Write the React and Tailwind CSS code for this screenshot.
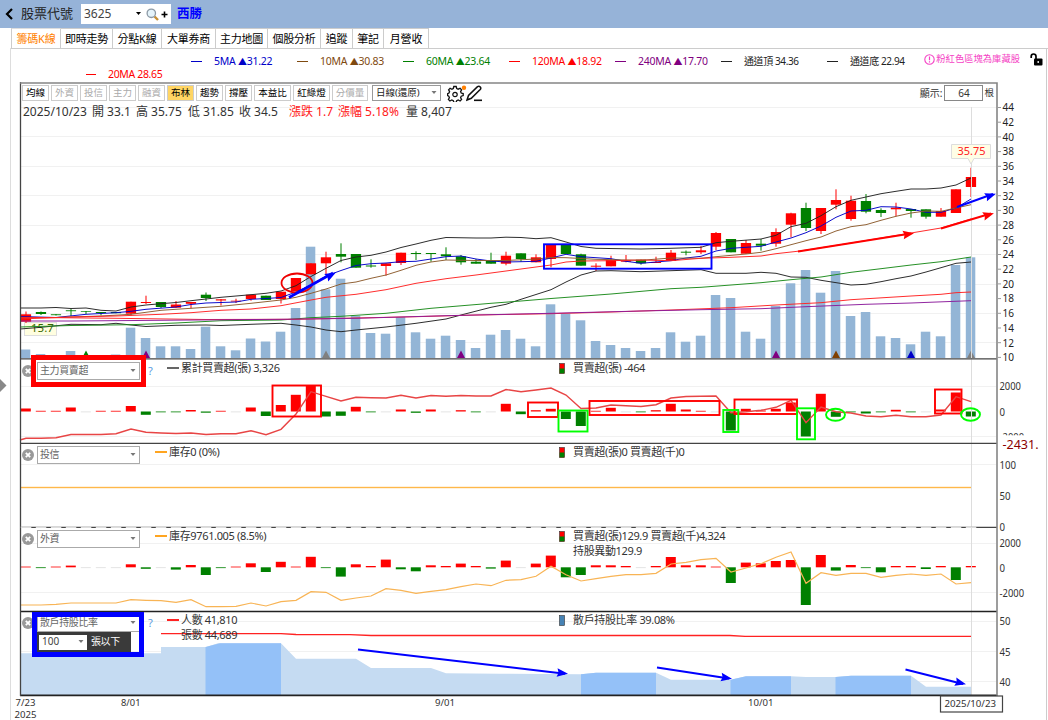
import React from 'react';

const RED = '#ff0000';
const GREEN = '#008000';

// body top, body bottom, wick top, wick bottom, color, volume top
const candles = [
  [314.3, 321.7, 311.5, 323, 'r', 349.5], [312, 314, 311.5, 315, 'g', 354], [314.3, 315.2, 314, 315.5, 'g', 356.5],
  [310.3, 311.2, 309, 316, 'g', 351], [311.3, 312, 311, 314, 'g', 356.5], [312, 313, 312, 315.3, 'g', 356.5],
  [312, 313.2, 312, 313.2, 'g', 354.5], [301.7, 313.7, 301.7, 315.5, 'r', 327.7], [302, 303, 295.7, 304, 'r', 338],
  [302, 307, 302, 308, 'g', 346.3], [304.5, 307.7, 301, 307.7, 'r', 346.3], [302, 303.8, 302, 308.3, 'r', 349],
  [294.7, 298, 292.5, 301, 'g', 326.7], [299.3, 300.5, 299, 305.5, 'r', 346.3], [300.7, 301.5, 298.7, 303, 'r', 350.3],
  [294.7, 299, 294.7, 300.7, 'r', 338.5], [295.7, 300, 295.7, 300, 'g', 341.5], [291.7, 299, 291.7, 303.5, 'r', 331.7],
  [278, 291, 278, 291, 'r', 308], [263.3, 274.3, 263.3, 274.3, 'r', 246.7], [257.3, 263.3, 251.7, 274.3, 'r', 289.3],
  [254, 256.7, 243.3, 262.3, 'g', 278.7], [254, 267.7, 254, 267.7, 'g', 315.7], [265.5, 266.5, 259.3, 267.7, 'g', 333],
  [263.3, 266, 263.3, 275.7, 'r', 333.7], [252.7, 263, 252.7, 265, 'r', 317], [253, 254, 251.3, 260, 'g', 332.3],
  [253, 254, 253, 261.7, 'g', 338.7], [254.3, 256.3, 247.3, 260, 'g', 335.7], [256.3, 262.3, 255, 264.7, 'g', 340],
  [261.7, 263.7, 259, 263.7, 'g', 348], [261, 263.7, 252.7, 263.7, 'g', 334.7], [255.7, 263.7, 251.7, 265.3, 'r', 330],
  [253.3, 259, 253.3, 261.7, 'g', 338.7], [257.3, 262.3, 254.3, 262.3, 'r', 346.3], [244.7, 259, 244.7, 267.3, 'r', 304.3],
  [244, 254, 244, 254, 'g', 313.7], [254.3, 265.7, 253.7, 265.7, 'g', 320.3], [265.7, 266.7, 263.3, 271, 'r', 341],
  [260, 266.3, 255.7, 266.3, 'r', 345], [260.3, 261.7, 255, 262.3, 'r', 348], [259.7, 263.3, 259.7, 264.7, 'g', 351],
  [262, 263, 256.7, 263, 'r', 348], [252.7, 261, 250, 261, 'r', 332.3], [251.7, 252.7, 250.5, 255.3, 'g', 341.7],
  [250.3, 252.3, 246, 254, 'r', 335.7], [233, 246.7, 232, 250, 'r', 295], [239, 252.3, 239, 252.3, 'g', 298],
  [243, 253.7, 240, 253.7, 'r', 331.7], [243.7, 245.7, 239, 250.7, 'g', 338.7], [232, 243.7, 228.3, 246.7, 'r', 306],
  [213.3, 224.7, 212.7, 237.3, 'r', 283.3], [208, 228, 202.7, 231, 'g', 270], [208, 231, 208, 234, 'r', 292.7],
  [200, 204.7, 189.3, 209.3, 'r', 271], [200.7, 219, 195.7, 220.7, 'r', 316], [201, 211.7, 194, 213.3, 'g', 312],
  [210, 213, 208.3, 217, 'g', 336.3], [207.7, 209.3, 202.7, 216.3, 'r', 338], [209, 211, 209, 217.7, 'g', 344.3],
  [209.3, 216.7, 209.3, 218.7, 'g', 331.7], [211, 216.7, 208, 216.7, 'r', 336.3], [189.3, 213, 189.3, 213, 'r', 265],
  [177, 187, 167.7, 197, 'r', 257.3],
];

const mainBars = [3, 0.7, 0.7, 4, 0, 0.7, 0.7, 5.5, -3.3, -0.7, -0.7, 1.5, -1.2, 0.7, 0, 4, -4.5, 6.5, 16.7, 26, -5, -4.3,
  4.7, -0.7, 0, 2, -1.3, 2, 0, 1.3, -0.7, 0, 7.7, -2.7, 1.3, 2.7, -7.5, -14.5, 0.7, 3.7, 0, -0.7, 1.3, 7.7, 2, 0.7, 0, -19,
  2.7, 1, 2.7, 9, -25, 17.7, -5.3, -0.7, -2, -0.7, 1.7, -0.7, 0, 2, 19, -5];

const mainLine = [438.3, 438.3, 437.7, 434.5, 434.5, 434.5, 433.7, 429, 432.3, 433, 433.5, 433, 434.5, 433.7, 433.7, 430.7,
  434.7, 429.3, 414, 391.7, 396.3, 401, 397.3, 397.7, 398, 395.3, 398, 395.5, 396.3, 395.5, 396, 396, 389.5, 391.7, 390, 388,
  395, 408.5, 408, 405, 405.7, 406.5, 404.7, 398, 396.5, 396.2, 396, 412.7, 411.7, 410.3, 407.3, 400.3, 422.7, 407, 411.7,
  413, 416, 416.7, 415.3, 416.7, 416.7, 415, 396.7, 401.7];

const foreignBars = [0.7, -0.7, 0.7, 1.7, 0, 0, 0, 3, -1.5, 0, -2.3, 2.3, -7.7, -0.7, 0.7, 4, -4.7, 5.5, 0.7, 10.5, -0.7, -9.3,
  3, 1.3, 7.7, -2, -4, 2, 1.3, 3.7, 1.3, -1.3, 6.7, 0, 3.7, 11.7, -10, -7.7, 2, 2, 1.3, 0, 1.3, 10.3, 2, 2, 0.7, -15.7, 4.7,
  4, 6.3, 7.3, -37.7, 12.3, -3.3, 2.3, -0.7, -5, 1.3, 1.3, -1.7, 1.3, -12.7, 1.3];

const foreignLine = [605, 605, 604.3, 603, 603, 603, 603, 599.7, 600.3, 600.7, 602.3, 599.7, 606.7, 606.7, 606.3, 603, 606,
  601.7, 600.3, 591.7, 592.3, 600.3, 598, 596, 588.7, 590.3, 593.3, 591.3, 589.7, 586.7, 584, 585.7, 580.3, 579.7, 576.3,
  566.3, 574.7, 581, 578.7, 576.3, 574.7, 574.7, 573.3, 564, 562.3, 559.7, 558.3, 572, 568, 563.7, 557.3, 552, 583.3, 572.7,
  575.3, 573.3, 573.3, 577.3, 575.3, 574, 575.3, 574, 584, 582.7];

const lines = [
  { color: '#222', pts: '20,308 41,308 56,307.5 71,308.5 86,308 101,310.3 116,311 131,307 146,305 161,303.7 176,302.5 191,300.7 206,299 221,297.3 236,296 251,294.7 266,293.3 281,291 296,285.7 311,276.5 326,268.3 341,260.5 356,257 371,255.3 386,252 401,247.5 416,244 431,240.3 446,237.5 476,238 491,238 506,237.2 521,237.5 536,238.7 551,237.7 566,242 581,246.5 596,248.3 641,249 671,248.3 701,247.3 716,242.7 731,241.3 761,239 776,235.3 791,226.7 806,223.3 821,215.7 836,206.7 851,200.3 866,197 881,193.7 896,191.3 911,189 926,189 941,188 956,185 971,178' },
  { color: '#222', pts: '20,329 41,327.3 71,324.3 101,324.7 116,323.3 131,325 146,326.5 176,325.3 206,325 221,325.5 251,324.3 281,323.3 296,325 311,327 326,330 341,331.7 356,330 386,327 416,323.3 446,319 461,315 491,307.3 506,304.3 521,299.3 551,289.7 566,282 581,275 596,271 611,270.7 641,271.7 671,270.7 701,269.7 716,273.3 746,273.3 761,272.3 776,273.3 791,277 806,277.3 821,280.3 851,285 866,284.3 881,281.7 896,278.7 911,276 926,272 941,267.7 956,263.3 971,262' },
  { color: '#0000c8', pts: '20,316.5 56,317.5 86,314.3 116,312.7 131,311.3 146,309.3 176,307 191,304.5 206,303 236,302 251,299.3 266,298.5 281,297.5 296,292 311,285 326,276 341,270.5 356,265.5 371,263.7 386,263 401,261.7 416,261.3 431,259 446,256.7 461,256 476,259 491,261 506,262 521,261.7 536,261.3 551,258 566,254.3 581,256.7 611,258.7 626,261.3 641,263.3 656,262 671,260.7 686,258 701,256.3 716,251 731,248.3 761,246.3 776,242 791,238 806,232.7 821,226 836,217.3 851,211 866,210.3 881,206.7 896,207 911,209 926,212.3 941,212.3 956,208 971,199' },
  { color: '#8b5a2b', pts: '20,317.7 56,317.5 101,316 131,314.3 161,310.3 191,308.3 221,306.3 251,303.3 281,300 296,297.3 311,293.3 326,289 341,284 356,282 371,278.3 386,275 401,270.3 416,265.3 431,262 446,260 476,260.5 506,260.5 536,259 551,257.5 566,257.7 596,259.3 641,260.3 671,258 701,258.3 716,256.7 746,254 761,252.3 776,248.7 806,240.7 821,237 836,231 851,226.7 866,224.7 881,220.3 896,216.3 911,213 926,211 941,211.3 956,208 971,204.7' },
  { color: '#f22', pts: '20,319 71,317 116,316 161,314.3 191,312.7 221,310.3 251,309 281,305.7 311,300 326,297.3 356,294.3 386,289.7 416,283.3 446,278.7 476,275 506,271 536,267 551,265 566,262 581,261 611,260.7 641,260 671,260.7 701,258.3 731,257.3 761,256 776,253.7 800,251 851,243 911,233 941,228 971,219' },
  { color: '#1a8a1a', pts: '20,327 71,325.5 131,324.7 176,323 221,320.7 281,320 311,317.7 341,316.3 386,313.3 431,308.3 491,303.3 521,301 551,298.5 611,294 671,288.7 701,287.3 731,285 761,282.7 791,279.7 821,277 851,272.3 881,268.7 911,265 941,261.7 971,257' },
  { color: '#f22', pts: '20,317.3 116,318.3 206,319.5 296,319.3 356,318 416,316.7 476,315 551,313.7 611,312 671,310 731,307.7 776,305 821,302.7 851,299.7 911,296 941,294.3 956,292.7 971,292' },
  { color: '#8b1a9b', pts: '20,321 71,321 161,320.3 281,319.3 356,318.3 446,315.7 551,313.3 641,311 701,309.7 761,308.7 806,306.7 866,304.3 911,303 971,300.7' },
];

const tabs = [
  { name: '籌碼K線', cls: 'w-[50px] text-[#ff7f00] border-l border-t-[#ddd] border-b-transparent' },
  { name: '即時走勢', cls: 'w-[52px]' },
  { name: '分點K線', cls: 'w-[49px]' },
  { name: '大單券商', cls: 'w-[54px]' },
  { name: '主力地圖', cls: 'w-[52px]' },
  { name: '個股分析', cls: 'w-[53px]' },
  { name: '追蹤', cls: 'w-[32px]' },
  { name: '筆記', cls: 'w-[31px]' },
  { name: '月營收', cls: 'w-[45px]' },
];

const legends = [
  { name: '5MA', value: '31.22', up: true, cls: 'text-[#0000c8]' },
  { name: '10MA', value: '30.83', up: true, cls: 'text-[#7f4a10]' },
  { name: '60MA', value: '23.64', up: true, cls: 'text-[#008000]' },
  { name: '120MA', value: '18.92', up: true, cls: 'text-[#ff0000]' },
  { name: '240MA', value: '17.70', up: true, cls: 'text-[#800080]' },
  { name: '通道頂', value: '34.36', cls: 'text-[#222]' },
  { name: '通道底', value: '22.94', cls: 'text-[#222]' },
];

const tools = [
  ['均線', 'w-[27px] text-black'], ['外資', 'w-[27px] text-[#aaa]'], ['投信', 'w-[27px] text-[#aaa]'],
  ['主力', 'w-[27px] text-[#aaa]'], ['融資', 'w-[27px] text-[#aaa]'], ['布林', 'w-[27px] text-black bg-[#ffd564]'],
  ['趨勢', 'w-[27px] text-black'], ['撐壓', 'w-[27px] text-black'], ['本益比', 'w-[37px] text-black'],
  ['紅綠燈', 'w-[37px] text-black'], ['分價量', 'w-[36px] text-[#aaa]'],
];

const barX = (i) => 26 + i * 15;
const toPoints = (arr) => arr.map((y, i) => `${barX(i)},${y}`).join(' ');

const Bars = ({ values, zero }) => (
  <g>
    {values.map((v, i) => (
      <rect
        key={i}
        x={barX(i) - 5.2}
        width="10"
        y={v > 0 ? zero - v : zero}
        height={Math.max(Math.abs(v), 0.8)}
        fill={v === 0 ? '#ddd' : v > 0 ? RED : GREEN}
      />
    ))}
  </g>
);

const Arrow = ({ x1, y1, x2, y2, color, width = 2.2 }) => {
  const angle = (Math.atan2(y2 - y1, x2 - x1) * 180) / Math.PI;
  return (
    <g>
      <line x1={x1} y1={y1} x2={x2 - 2} y2={y2} stroke={color} strokeWidth={width} />
      <path d="M1 0L-10 -4.300L-8.500 0L-10 4.300Z" fill={color} transform={`translate(${x2} ${y2}) rotate(${angle})`} />
    </g>
  );
};

const Caret = () => (
  <svg width="6" height="4" viewBox="0 0 6 4"><path d="M.5 0H5.500L3 3Z" fill="#777" /></svg>
);

const Label = ({ x, y, w, children, ...rest }) => (
  <text x={x} y={y} textLength={w} lengthAdjust="spacingAndGlyphs" {...rest}>{children}</text>
);

const ChartBase = () => (
  <svg className="absolute left-0 top-0" width="1048" height="638" viewBox="0 82 1048 638">
    {/* grid */}
    <g stroke="#f1f1f1" strokeWidth="1">
      {[107.5, 136.5, 166.5, 195.5, 225.5, 254.5, 284.5, 313.5, 342.5, 386.5, 436.5, 464.5, 543.5, 592.5, 621.5, 651.5, 681.5].map((y) => (
        <line key={y} x1="20" x2="996" y1={y} y2={y} />
      ))}
    </g>

    {/* shareholder area */}
    <path d="M20 695V653.3H161V647H206L218 643.3H281L296 658.7H356L371 668H431L446 673.3L500 673.7L581 674.3L596 672.7H656L671 679.7H731L746 676.3H791L806 677H836L851 675.7H911L926 686.7H971V695Z" fill="#c5dbf2" />
    <g fill="#94c1f8">
      <path d="M205.500 695V647L220 643.300H281V695Z" />
      <path d="M581 695V674.300L596 672.700H656V695Z" />
      <path d="M730.500 695V679.700L746 676.300H791V695Z" />
      <path d="M835.500 695V677L851 675.700H911V695Z" />
    </g>
    <path d="M161 633.700H281L296 634.500L350 634.700L371 635.500H730L745 636.400H971" fill="none" stroke="#f22" strokeWidth="1.300" />

    {/* volume and candles */}
    {candles.map((c, i) => (
      <rect key={i} x={barX(i) - 5.2} y={c[5]} width="9.500" height={358 - c[5]} fill="#93b5d6" />
    ))}
    <rect x="24.500" y="322.500" width="32" height="13" fill="#fffee0" stroke="#ddd" />
    <text x="31" y="332" fontSize="11.500" fill="#3a6b00">15.7</text>
    {candles.map((c, i) => (
      <g key={i} fill={c[4] === 'r' ? RED : GREEN}>
        <rect x={barX(i) - 5.2} y={c[0]} width="10.300" height={c[1] - c[0]} />
        <rect x={barX(i) - 0.5} y={c[2]} width="1" height={c[3] - c[2]} />
      </g>
    ))}
    {lines.map((l, i) => (
      <polyline key={i} points={l.pts} fill="none" stroke={l.color} strokeWidth="0.950" />
    ))}
    {[[86, '#008000'], [146, '#800080'], [326, '#808080'], [461, '#800080'], [776, '#800080'], [836, '#804000'], [911, '#0000c8'], [971, '#808080']].map(([x, fill]) => (
      <path key={x} d={`M${x - 4} 358L${x} 350.5L${x + 4} 358Z`} fill={fill} />
    ))}

    <Bars values={mainBars} zero={411.5} />
    <polyline points={`20,440 ${toPoints(mainLine)}`} fill="none" stroke="#e84545" strokeWidth="1.400" />
    <rect x="20" y="486.800" width="951" height="1.400" fill="#ffb84a" />
    <Bars values={foreignBars} zero={567.3} />
    <polyline points={`20,605 ${toPoints(foreignLine)}`} fill="none" stroke="#f8b455" strokeWidth="1.200" />
    <line x1="971.500" x2="971.500" y1="107" y2="695" stroke="#ddd" />

    {/* frame */}
    <g stroke="#444" strokeWidth="1.300">
      <line x1="20" x2="997" y1="358.800" y2="358.800" />
      <line x1="20" x2="997" y1="443.300" y2="443.300" />
      <line x1="20" x2="997" y1="527.300" y2="527.300" />
      <line x1="20" x2="997" y1="611.500" y2="611.500" stroke="#222" />
      <line x1="20" x2="997" y1="695.400" y2="695.400" strokeWidth="1.800" stroke="#222" />
      <line x1="20.500" x2="20.500" y1="82" y2="696" />
    </g>
    {candles.map((c, i) => (
      <rect key={i} x={barX(i) - 5.2} y="526.500" width="10.500" height="1.500" fill="#ddd" />
    ))}
    <path d="M20 83H997V696" fill="none" stroke="#858585" strokeWidth="1.600" />

    {/* axis labels */}
    <g fontSize="10.700" fill="#222">
      {Array.from({ length: 18 }, (_, i) => (
        <g key={i}>
          <line x1="998" x2="1001" y1={107.5 + i * 14.7} y2={107.5 + i * 14.7} stroke="#999" />
          <Label x="1002.500" y={111.3 + i * 14.7} w="11.500">{44 - i * 2}</Label>
        </g>
      ))}
    </g>
    <g fontSize="11.500" fill="#333">
      <Label x="999.500" y="390" w="21.500">2000</Label>
      <Label x="999.500" y="415.700" w="5.500">0</Label>
      <Label x="999.500" y="441" w="24.500">-2000</Label>
      <rect x="999" y="435.300" width="40" height="20" fill="#fff" />
      <Label x="1002.500" y="448.800" w="36" fontSize="12.500" fill="#8b0000">-2431.</Label>
      <Label x="999.500" y="468.500" w="16.500">100</Label>
      <Label x="999.500" y="499.500" w="11">50</Label>
      <Label x="999.500" y="530.500" w="5.500">0</Label>
      <Label x="999.500" y="547" w="21.500">2000</Label>
      <Label x="999.500" y="571.500" w="5.500">0</Label>
      <Label x="999.500" y="596.500" w="24.500">-2000</Label>
      <Label x="999.500" y="625" w="11">50</Label>
      <Label x="999.500" y="655.500" w="11">45</Label>
      <Label x="999.500" y="685.500" w="11">40</Label>
    </g>
    <g fontSize="9.500" fill="#333">
      <Label x="15.500" y="706.300" w="20">7/23</Label>
      <Label x="14.500" y="717.500" w="22">2025</Label>
      <Label x="121" y="706.300" w="19.500">8/01</Label>
      <Label x="435" y="706.300" w="20">9/01</Label>
      <Label x="748" y="706.300" w="25.500">10/01</Label>
      <rect x="940.500" y="696" width="62" height="16" fill="#fff" stroke="#444" strokeWidth="1.200" />
      <Label x="944.500" y="707" w="51.500">2025/10/23</Label>
    </g>

    <path d="M951.500 144.500H990.500V158.500H974L971 164L968 158.500H951.500Z" fill="#fffee6" stroke="#ddd" />
    <Label x="957.500" y="155" w="28" fontSize="11" fill="#f22">35.75</Label>
  </svg>
);

const Annotations = () => (
  <svg className="absolute left-0 top-0 pointer-events-none" width="1048" height="638" viewBox="0 82 1048 638" fill="none">
    <rect x="33.500" y="357.500" width="110" height="27" stroke={RED} strokeWidth="5" />
    <rect x="34.500" y="614.500" width="107" height="40" stroke="#0000ff" strokeWidth="5" />
    <ellipse cx="297" cy="283" rx="15.500" ry="9.500" stroke="#e00" strokeWidth="1.800" />
    <rect x="544" y="244.300" width="167.500" height="24.400" stroke="#00f" strokeWidth="1.900" />
    <Arrow x1={289} y1={297.500} x2={335} y2={273} color="#00f" width={2.600} />
    <Arrow x1={798} y1={251.500} x2={913} y2={233.500} color={RED} width={2} />
    <Arrow x1={941} y1={228.500} x2={993} y2={213.500} color={RED} width={2} />
    <Arrow x1={957} y1={207} x2={995} y2={194} color="#00f" width={2} />
    <g stroke={RED} strokeWidth="1.900">
      <rect x="272.500" y="385.500" width="48.500" height="31" />
      <rect x="528" y="402.500" width="30" height="14.500" />
      <rect x="589.500" y="401" width="130" height="14" />
      <rect x="734.500" y="399.500" width="62.500" height="14.500" />
      <rect x="935" y="389.500" width="26.500" height="24" />
    </g>
    <g stroke="#00ff00" strokeWidth="1.900">
      <rect x="558.500" y="410.500" width="29" height="21" />
      <rect x="723.300" y="410" width="15" height="22" />
      <rect x="797" y="408.300" width="18" height="31" />
      <ellipse cx="835.500" cy="414.700" rx="9.500" ry="6" />
      <ellipse cx="970.500" cy="414.500" rx="9.500" ry="6.200" />
    </g>
    <Arrow x1={358} y1={649.500} x2={567} y2={673.700} color="#00f" width={2} />
    <Arrow x1={657} y1={667.500} x2={731} y2={678.500} color="#00f" width={2} />
    <Arrow x1={905.500} y1={669.500} x2={965} y2={684} color="#00f" width={2} />
    <path d="M0 379L6.500 385.500L0 392Z" fill="#888" />
  </svg>
);

const PanelHeader = ({ title, help, count, left, leftSub, leftColor, right, rightSub, icon }) => (
  <div className="relative flex items-start pl-[22px] text-xs text-[#333]">
    <svg className="mt-[5px] shrink-0" width="12" height="12" viewBox="0 0 12 12">
      <circle cx="6" cy="6" r="6" fill="#999" />
      <path d="M3.800 3.800L8.200 8.200M8.200 3.800L3.800 8.200" stroke="#fff" strokeWidth="1.800" />
    </svg>
    <div className="ml-[3px] mt-[2px] w-[103px] shrink-0">
      <div className="flex h-[18px] items-center justify-between border border-[#aaa] bg-white pl-[2px] pr-[3px] text-[10px] text-[#666]">
        <span className="whitespace-nowrap tracking-[-0.4px]">{title}</span>
        <Caret />
      </div>
      {count && (
        <div className="flex h-[20px] w-[94px] items-center bg-[#3a3a3a] pl-[2px] text-[10px] text-white">
          <div className="mr-[4px] flex h-[15px] w-[48px] items-center justify-between bg-white px-[3px] text-[#444]">
            {count}<Caret />
          </div>
          <span className="whitespace-nowrap tracking-[-0.4px]">張以下</span>
        </div>
      )}
    </div>
    <span className="mt-[4px] w-[15px] shrink-0 pl-[8px] text-[11px] leading-[14px] text-[#5b9be0]">{help}</span>
    <div className={`flex shrink-0 items-start gap-[2px] ${help ? 'w-[404px] pl-[12px]' : 'w-[404px] pl-0'}`}>
      <svg className="mt-[7px] shrink-0" width="12" height="2"><rect width="12" height="2" fill={leftColor} /></svg>
      <div className="whitespace-nowrap text-[11px] leading-[15px] tracking-[-0.35px]">
        <div>{left}</div>
        <div>{leftSub}</div>
      </div>
    </div>
    <svg className="mt-[3px] shrink-0" width="6" height="11" viewBox="0 0 6 11">
      <rect x=".5" y=".5" width="5" height="10" fill={icon === 'blue' ? '#4682b4' : RED} stroke="#333" strokeWidth="0.600" />
      {icon !== 'blue' && <rect x="0.700" y="5.500" width="4.600" height="4.800" fill={GREEN} />}
    </svg>
    <div className="ml-[8px] whitespace-nowrap text-[11px] leading-[15px] tracking-[-0.35px]">
      <div>{right}</div>
      <div>{rightSub}</div>
    </div>
  </div>
);

const Toolbar = () => (
  <div className="relative flex h-[20px] items-center pl-[22px] pt-[2px]">
    <div className="flex gap-[2px]">
      {tools.map(([name, cls]) => (
        <button key={name} className={`h-[16px] whitespace-nowrap border border-[#ccc] text-center text-[9.5px] leading-[14px] ${cls}`}>{name}</button>
      ))}
    </div>
    <div className="ml-[4px] flex h-[16px] w-[69px] items-center justify-between border border-[#999] pl-[3px] pr-[3px] text-[9.5px] text-[#222]">
      <span className="whitespace-nowrap">日線(還原)</span>
      <Caret />
    </div>
    <svg className="ml-[6px]" width="20" height="17" viewBox="0 0 20 17" fill="none">
      <path d="M6.800 1.500h2.400l.5 2 1.500.7 1.900-1 1.500 1.600-1 1.800.6 1.400 2 .6v2l-2 .6-.6 1.500 1 1.800-1.500 1.500-1.900-1-1.500.7-.5 1.800H6.800l-.5-1.800-1.500-.7-1.900 1-1.500-1.500 1-1.800L1.800 11.200.6 10.600v-2L2 8l.6-1.400-1-1.800 1.500-1.600 1.800 1 1.400-.7Z" stroke="#111" strokeWidth="1.300" />
      <circle cx="8" cy="9.500" r="2.200" stroke="#111" strokeWidth="1.200" />
      <circle cx="17" cy="2.800" r="2.200" fill="#ff7f00" />
    </svg>
    <svg className="-ml-[1px]" width="17" height="17" viewBox="0 0 17 17" fill="none" stroke="#111">
      <path d="M1 15L2.500 10.500L11.500 1.700Q13 .7 14.300 2Q15.300 3.200 14.200 4.500L5.300 13.300Z" strokeWidth="1.500" />
      <path d="M8 15.300H16" strokeWidth="1.600" />
    </svg>
    <div className="ml-auto flex items-center pr-[54px] text-[10px] text-[#333]">
      <span className="mr-[2px]">顯示:</span>
      <div className="h-[16px] w-[39px] border border-[#888] text-center leading-[14px]">64</div>
      <span className="ml-[1px] text-[9.5px]">根</span>
    </div>
  </div>
);

const App = () => {
  return (
    <div className="relative flex h-[720px] w-[1048px] flex-col overflow-hidden bg-white font-['Noto_Sans','Noto_Sans_CJK_TC',sans-serif]">
      <header className="flex h-[28px] shrink-0 items-center bg-[#96b3d8] pl-[5px] text-[13px] text-[#222]">
        <svg width="8" height="12" viewBox="0 0 8 12"><path d="M7 1L2 6L7 11" fill="none" stroke="#000" strokeWidth="2.200" /></svg>
        <span className="ml-[8px] w-[60px] whitespace-nowrap">股票代號</span>
        <div className="flex h-[20px] w-[90px] items-center bg-white pl-[3px] text-[12px]">
          <span className="w-[52px] text-[#444]">3625</span>
          <svg width="5" height="4" viewBox="0 0 5 4"><path d="M0 0H5L2.500 3Z" fill="#000" /></svg>
          <svg className="ml-[5px]" width="13" height="13" viewBox="0 0 13 13" fill="none">
            <path d="M8.500 8.500L12 12" stroke="#c79035" strokeWidth="2.400" />
            <circle cx="5.300" cy="5.300" r="4.200" fill="#e5f4fb" stroke="#8c99a5" strokeWidth="1.300" />
          </svg>
          <svg className="ml-[2px]" width="7" height="7" viewBox="0 0 7 7"><path d="M3.500 .5V6.500M.5 3.500H6.500" stroke="#000" strokeWidth="1.600" /></svg>
        </div>
        <span className="ml-[6px] text-[12.5px] font-bold text-[#00f]">西勝</span>
      </header>

      <div className="relative flex min-h-0 flex-1 flex-col">
        <nav className="ml-[11px] flex h-[21px] shrink-0 border-b border-[#ccc]">
          {tabs.map((tab) => (
            <button key={tab.name} className={`h-[21px] shrink-0 whitespace-nowrap border-b border-r border-t border-[#ccc] text-center text-[11px] leading-[20px] tracking-[-0.2px] ${tab.cls}`}>{tab.name}</button>
          ))}
        </nav>

        <div className="relative h-[33px] shrink-0 pt-[5px] text-[10.5px] leading-[14px]">
          <div className="flex pl-[191px]">
            {legends.map((l) => (
              <div key={l.name} className={`flex h-[14px] w-[106px] shrink-0 items-center whitespace-nowrap ${l.cls}`}>
                <span className="mr-[12px] h-px w-[11px] bg-current" />
                {l.up
                  ? <span className="tracking-[-0.25px]">{l.name} <span className="text-[9px]">▲</span>{l.value}</span>
                  : <span className="text-[10px] tracking-[-0.4px]">{l.name} {l.value}</span>}
              </div>
            ))}
          </div>
          <div className="-mt-px flex h-[14px] items-center pl-[86px] tracking-[-0.35px] text-[#ff0000]">
            <span className="mr-[12px] h-px w-[10px] bg-current" />20MA 28.65
          </div>
          <div className="absolute right-[5px] top-[3px] flex items-center text-[9.3px] text-[#f542c5]">
            <svg className="mr-[1px]" width="11" height="11" viewBox="0 0 11 11" fill="none" stroke="#f542c5">
              <circle cx="5.500" cy="5.500" r="4.700" strokeWidth="1.100" />
              <path d="M5.500 2.500V6.300M5.500 7.300V8.500" strokeWidth="1.200" />
            </svg>
            <span className="whitespace-nowrap">粉紅色區塊為庫藏股</span>
            <svg className="ml-[10px]" width="13" height="13" viewBox="0 0 13 13">
              <path d="M1.200 5V3.500Q1.200 1 3.500 1Q6 1 6 3.500V6" fill="none" stroke="#000" strokeWidth="1.700" />
              <rect x="4" y="5.500" width="8.500" height="7" rx="1" fill="#000" />
              <path d="M8.200 8V10" stroke="#fff" strokeWidth="1.300" />
            </svg>
          </div>
        </div>

        <main className="relative h-[638px] shrink-0">
          <ChartBase />
          <section className="relative h-[278px]">
            <Toolbar />
            <div className="flex items-center whitespace-pre pl-[23px] text-[12px] leading-[20px] text-[#333]">
              <span className="w-[69px]">2025/10/23</span>
              <span className="w-[44px]">開 33.1</span>
              <span className="w-[52px]">高 35.75</span>
              <span className="w-[51px]">低 31.85</span>
              <span className="w-[50px]">收 34.5</span>
              <span className="w-[49px] text-[#ff2020]">漲跌 1.7</span>
              <span className="w-[68px] text-[#ff2020]">漲幅 5.18%</span>
              <span>量 8,407</span>
            </div>
          </section>
          <section className="relative h-[84px]">
            <PanelHeader title="主力買賣超" help="?" left="累計買賣超(張) 3,326" leftColor="#666" right="買賣超(張) -464" />
          </section>
          <section className="relative h-[84px]">
            <PanelHeader title="投信" left="庫存0 (0%)" leftColor="#ffa520" right="買賣超(張)0 買賣超(千)0" />
          </section>
          <section className="relative h-[84px]">
            <PanelHeader title="外資" left="庫存9761.005 (8.5%)" leftColor="#ffa520" right="買賣超(張)129.9 買賣超(千)4,324" rightSub="持股異動129.9" />
          </section>
          <section className="relative h-[84px]">
            <PanelHeader title="散戶持股比率" help="?" count="100" left="人數 41,810" leftSub="張數 44,689" leftColor="#f22" right="散戶持股比率 39.08%" icon="blue" />
          </section>
          <Annotations />
        </main>

        <div className="pointer-events-none absolute bottom-0 left-0 top-[20px] w-[11px] border-r border-[#ddd]" />
        <div className="pointer-events-none absolute bottom-0 right-0 top-[20px] w-[2px] border-l border-[#ccc]" />
      </div>
    </div>
  );
};

export default App;
